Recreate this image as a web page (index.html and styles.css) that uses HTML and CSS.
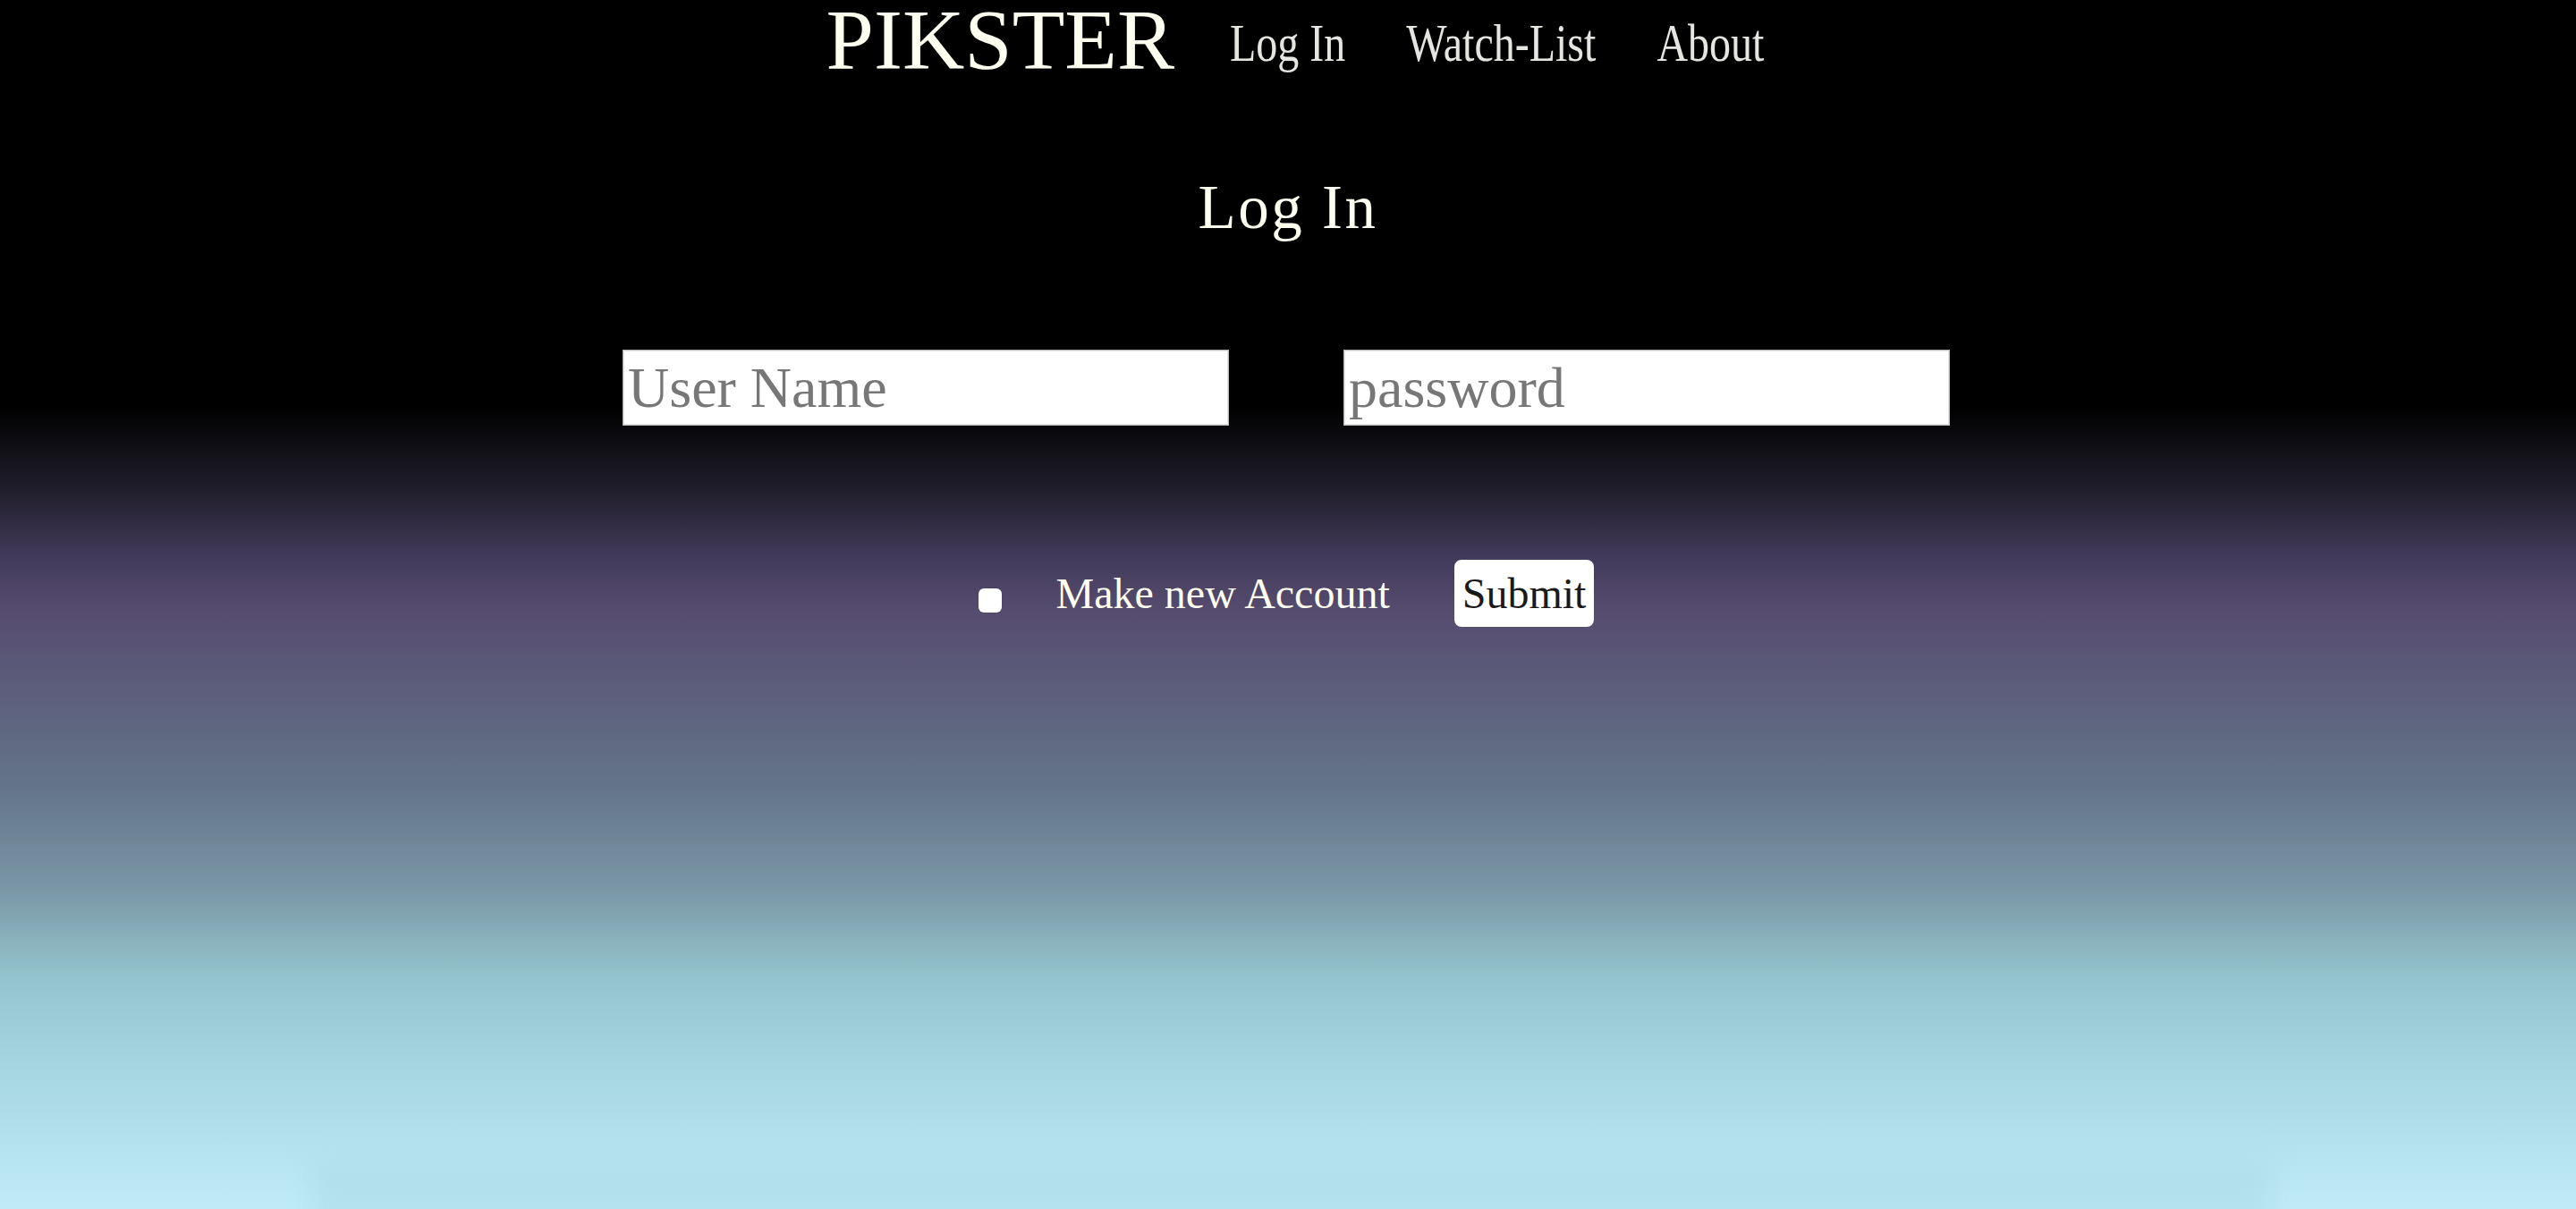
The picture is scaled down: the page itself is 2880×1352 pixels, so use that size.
FILE: index.html
```html
<!DOCTYPE html>
<html lang="en">
<head>
<meta charset="utf-8">
<title>PIKSTER - Log In</title>
<link rel="stylesheet" href="styles.css">
</head>
<body>
  <header class="top">
    <span class="brand">PIKSTER</span>
    <nav class="nav">
      <a class="nav-link" href="#">Log In</a>
      <a class="nav-link" href="#">Watch-List</a>
      <a class="nav-link" href="#">About</a>
    </nav>
  </header>
  <main class="login">
    <h1 class="title">Log In</h1>
    <div class="fields">
      <input class="field" type="text" placeholder="User Name">
      <input class="field" type="password" placeholder="password">
    </div>
    <div class="actions">
      <input class="check" type="checkbox" id="newacct">
      <label class="check-label" for="newacct">Make new Account</label>
      <button class="submit" type="button">Submit</button>
    </div>
  </main>
  <div class="glow"></div>
</body>
</html>
```
FILE: styles.css
```css
html, body {
  margin: 0;
  padding: 0;
}
body {
  min-height: 1352px;
  font-family: "Liberation Serif", "Times New Roman", serif;
  color: #fffff0;
  background: linear-gradient(to bottom,
    #000 0px,
    #000 455px,
    #221f2e 551px,
    #433b5b 624px,
    #564c70 685px,
    #5c5e7b 771px,
    #647589 882px,
    #7a96a6 992px,
    #93c3cc 1090px,
    #a6d6e2 1194px,
    #c0ecf8 1352px);
  overflow: hidden;
  position: relative;
}
.top {
  display: flex;
  justify-content: center;
  align-items: flex-start;
  padding-left: 16px;
  height: 90px;
}
.brand {
  font-size: 96px;
  line-height: 90px;
  color: #fffff0;
  margin-right: 62px;
}
.nav {
  display: flex;
  gap: 68px;
}
.nav-link {
  display: inline-block;
  font-size: 48px;
  line-height: 48px;
  margin-top: 24px;
  color: #e6e6e0;
  text-decoration: none;
  transform: scaleY(1.25);
}
.login {
  display: flex;
  flex-direction: column;
  align-items: center;
}
.title {
  margin: 103px 0 0 0;
  font-size: 69px;
  line-height: 78px;
  font-weight: normal;
  letter-spacing: 2.5px;
  color: #fffff0;
}
.fields {
  display: flex;
  gap: 128px;
  margin-top: 120px;
  margin-right: 4px;
}
.field {
  box-sizing: border-box;
  width: 678px;
  height: 85px;
  margin: 0;
  padding: 0 5px;
  border: 1px solid #b9b9b9;
  box-shadow: inset 0 0 0 1px #e4e4e4;
  background: #fff;
  font-family: "Liberation Serif", "Times New Roman", serif;
  font-size: 64px;
  color: #111;
  outline: none;
}
.field::placeholder {
  color: #777;
}
.actions {
  display: flex;
  align-items: center;
  margin-top: 150px;
  margin-right: 4px;
}
.check {
  appearance: none;
  -webkit-appearance: none;
  width: 26px;
  height: 27px;
  margin: 16px 61px 0 0;
  background: #fff;
  border: none;
  border-radius: 6px;
  box-shadow: 0 0 1px rgba(0,0,0,0.3);
}
.check-label {
  font-size: 48px;
  line-height: 55px;
  color: #fffff0;
  margin-right: 72px;
}
.submit {
  font-family: "Liberation Serif", "Times New Roman", serif;
  font-size: 48px;
  line-height: 55px;
  padding: 10px 9px;
  border: none;
  border-radius: 8px;
  background: #fff;
  color: #1a1a1a;
}
.glow {
  position: absolute;
  left: 350px;
  right: 340px;
  bottom: -60px;
  height: 110px;
  background: rgba(160, 210, 218, 0.35);
  filter: blur(14px);
  pointer-events: none;
}
```
